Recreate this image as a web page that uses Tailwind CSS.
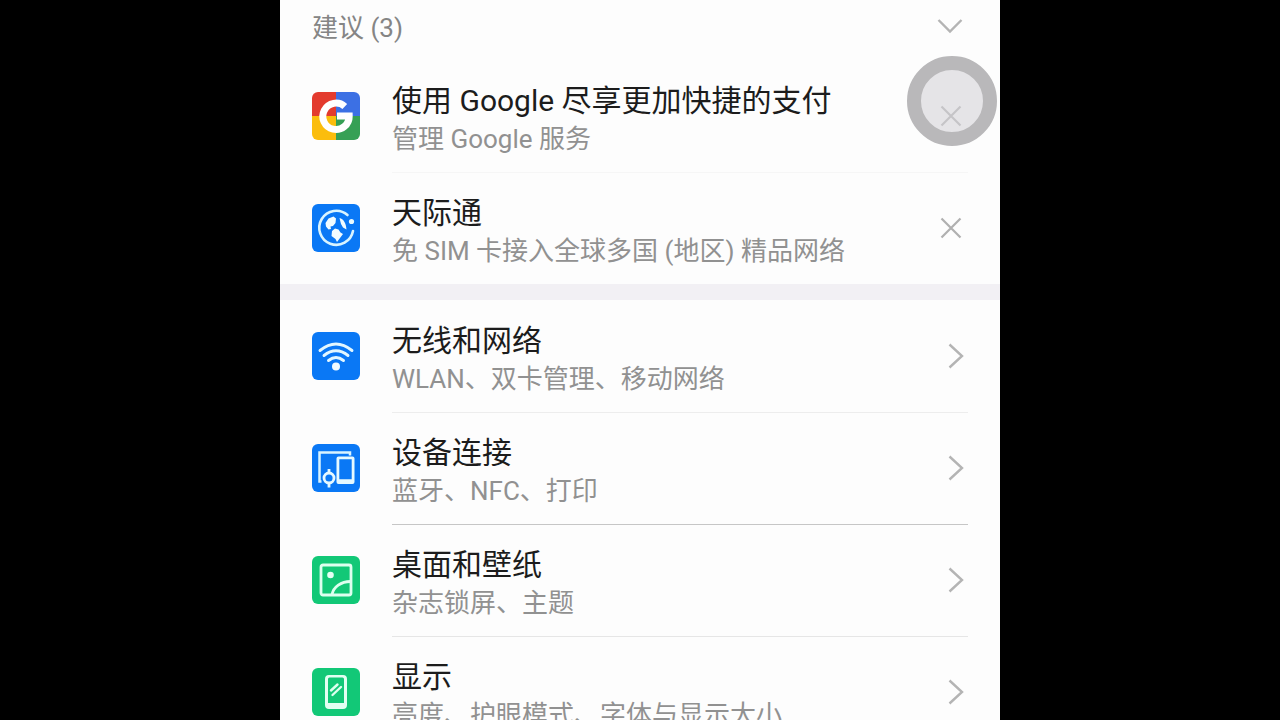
<!DOCTYPE html>
<html lang="zh-CN">
<head>
<meta charset="utf-8">
<meta name="viewport" content="width=device-width, initial-scale=1">
<title>设置</title>
<script src="https://cdn.jsdelivr.net/npm/@tailwindcss/browser@4"></script>
</head>
<body class="h-screen overflow-hidden bg-black font-['Roboto','Noto_Sans_CJK_SC',sans-serif]">
<main class="relative mx-auto min-h-full w-full max-w-[720px] bg-[#fdfdfd]">
  <section>
    <header class="flex h-15 items-start justify-between px-8 pt-2">
      <h2 class="text-[26px] leading-10 text-[#858585]">建议 (3)</h2>
      <button type="button" aria-label="收起建议" class="flex h-9 w-9 items-center justify-center">
        <svg class="h-9 w-9" viewBox="0 0 36 36" fill="none" stroke="#b4b4b4" stroke-width="2.4"><path d="M6.500 12l11.500 11.500L29.500 12"/></svg>
      </button>
    </header>
    <ul>
      <li class="flex h-28 gap-8 px-8">
        <svg class="mt-8 h-12 w-12 shrink-0" viewBox="0 0 48 48" aria-hidden="true">
          <clipPath id="tile"><rect width="48" height="48" rx="6"/></clipPath>
          <g clip-path="url(#tile)"><path fill="#e33b2e" d="M0 0h24v24H0z"/><path fill="#3c70e4" d="M24 0h24v24H24z"/><path fill="#fbbd0d" d="M0 24h24v24H0z"/><path fill="#36a055" d="M24 24h24v24H24z"/></g>
          <path d="M32.800 14.500A13.200 13.200 0 1 0 37.200 24H25" fill="none" stroke="#fff" stroke-width="7"/>
        </svg>
        <div class="flex min-w-0 grow border-t border-transparent pt-5">
          <a href="#google" class="min-w-0 grow">
            <span class="block truncate text-[30px] leading-10 text-[#1c1c1c]">使用 Google 尽享更加快捷的支付</span>
            <span class="block truncate text-[26px] leading-9 text-[#919191]">管理 Google 服务</span>
          </a>
          <button type="button" aria-label="关闭 Google 建议" class="mt-[19px] h-8 w-8 shrink-0">
            <svg class="h-8 w-8" viewBox="0 0 32 32" fill="none" stroke="#adadad" stroke-width="2.200"><path d="M5.500 6.500l19 19M24.500 6.500l-19 19"/></svg>
          </button>
        </div>
      </li>
      <li class="flex h-28 gap-8 px-8">
        <svg class="mt-8 h-12 w-12 shrink-0" viewBox="0 0 48 48" aria-hidden="true">
          <rect width="48" height="48" rx="6" fill="#0a78f5"/>
          <path d="M35.500 11A17 17 0 1 0 41 27" fill="none" stroke="#d9f4ff" stroke-width="2.600" stroke-linecap="round"/>
          <circle cx="39.500" cy="17.500" r="2.600" fill="#e9faff"/>
          <path fill="#f2fcff" d="M21.500 12.500l2.500 2-.5 4.500-2.500 3-2.500.5.500 2.500-2.500.5-2.500-3-.500-3.500 3-4.500zM23 24.500l3.500 1 2 3 2.500 1.500-3 4-3 4-1.500-3-4-3 .5-5zM27.500 14c4 1 6.500 5 7 11.500l-3.500-2-2-3.500z"/>
        </svg>
        <div class="flex min-w-0 grow border-t border-[#f6f6f6] pt-5">
          <a href="#skytone" class="min-w-0 grow">
            <span class="block truncate text-[30px] leading-10 text-[#1c1c1c]">天际通</span>
            <span class="block truncate text-[26px] leading-9 text-[#919191]">免 SIM 卡接入全球多国 (地区) 精品网络</span>
          </a>
          <button type="button" aria-label="关闭天际通建议" class="mt-[19px] h-8 w-8 shrink-0">
            <svg class="h-8 w-8" viewBox="0 0 32 32" fill="none" stroke="#b0b0b0" stroke-width="2.200"><path d="M5.500 6.500l19 19M24.500 6.500l-19 19"/></svg>
          </button>
        </div>
      </li>
    </ul>
  </section>
  <div class="h-4 bg-[#f2f0f4]"></div>
  <nav aria-label="设置">
    <a href="#network" class="flex h-28 gap-8 px-8">
      <svg class="mt-8 h-12 w-12 shrink-0" viewBox="0 0 48 48" aria-hidden="true">
        <rect width="48" height="48" rx="6" fill="#0a78f5"/>
        <g fill="none" stroke="#e2f7ff" stroke-width="2.900" stroke-linecap="round"><path d="M8 18.500Q24 5.500 40 18.500M12 23.500q12-9.500 24 0M16.500 28.500q7.500-6 15 0"/></g>
        <circle cx="24" cy="34.500" r="4" fill="#f2fcff"/>
      </svg>
      <span class="flex min-w-0 grow border-t border-transparent pt-5">
        <span class="min-w-0 grow">
          <span class="block truncate text-[30px] leading-10 text-[#1c1c1c]">无线和网络</span>
          <span class="block truncate text-[26px] leading-9 text-[#919191]">WLAN、双卡管理、移动网络</span>
        </span>
        <svg class="mt-[19px] h-8 w-6 shrink-0" viewBox="0 0 24 32" fill="none" stroke="#b4b4b4" stroke-width="2.400"><path d="M5.500 4.500L18 16 5.500 27.500"/></svg>
      </span>
    </a>
    <a href="#devices" class="flex h-28 gap-8 px-8">
      <svg class="mt-8 h-12 w-12 shrink-0" viewBox="0 0 48 48" aria-hidden="true">
        <rect width="48" height="48" rx="6" fill="#0a78f5"/>
        <path d="M9.500 37.500H7.500V8.500H38v3" fill="none" stroke="#d9f4ff" stroke-width="2.500"/>
        <path fill="#e6f9ff" fill-rule="evenodd" d="M26.500 12.500h14a2 2 0 0 1 2 2V38a2 2 0 0 1-2 2h-14a2 2 0 0 1-2-2V14.500a2 2 0 0 1 2-2zM27.300 15.300v20h12.400v-20z"/>
        <circle cx="17" cy="34" r="5" fill="none" stroke="#e6f9ff" stroke-width="2.800"/>
        <path d="M17 25v4M17 39v4.500" stroke="#e6f9ff" stroke-width="2.800"/>
      </svg>
      <span class="flex min-w-0 grow border-t border-[#ededed] pt-5">
        <span class="min-w-0 grow">
          <span class="block truncate text-[30px] leading-10 text-[#1c1c1c]">设备连接</span>
          <span class="block truncate text-[26px] leading-9 text-[#919191]">蓝牙、NFC、打印</span>
        </span>
        <svg class="mt-[19px] h-8 w-6 shrink-0" viewBox="0 0 24 32" fill="none" stroke="#b4b4b4" stroke-width="2.400"><path d="M5.500 4.500L18 16 5.500 27.500"/></svg>
      </span>
    </a>
    <a href="#wallpaper" class="flex h-28 gap-8 px-8">
      <svg class="mt-8 h-12 w-12 shrink-0" viewBox="0 0 48 48" aria-hidden="true">
        <rect width="48" height="48" rx="6" fill="#12c877"/>
        <g fill="none" stroke="#ddffef" stroke-width="2.800"><rect x="9" y="9" width="30" height="30" rx="2"/><path d="M20 38.500C21.500 31 29 25.500 38.500 25.500"/></g>
        <circle cx="18.500" cy="19" r="3.300" fill="#e6fff4"/>
      </svg>
      <span class="flex min-w-0 grow border-t border-[#c6c6c6] pt-5">
        <span class="min-w-0 grow">
          <span class="block truncate text-[30px] leading-10 text-[#1c1c1c]">桌面和壁纸</span>
          <span class="block truncate text-[26px] leading-9 text-[#919191]">杂志锁屏、主题</span>
        </span>
        <svg class="mt-[19px] h-8 w-6 shrink-0" viewBox="0 0 24 32" fill="none" stroke="#b4b4b4" stroke-width="2.400"><path d="M5.500 4.500L18 16 5.500 27.500"/></svg>
      </span>
    </a>
    <a href="#display" class="flex h-28 gap-8 px-8">
      <svg class="mt-8 h-12 w-12 shrink-0" viewBox="0 0 48 48" aria-hidden="true">
        <rect width="48" height="48" rx="6" fill="#12c877"/>
        <path fill="#e2fff2" fill-rule="evenodd" d="M17 7h14a4 4 0 0 1 4 4v26a4 4 0 0 1-4 4H17a4 4 0 0 1-4-4V11a4 4 0 0 1 4-4zM16 11v24h16V11a1.500 1.500 0 0 0-1.500-1.500h-13A1.500 1.500 0 0 0 16 11z"/>
        <path d="M19 22.500l6.500-6M20.500 27l8.500-8" stroke="#ddffef" stroke-width="2.400" stroke-linecap="round"/>
      </svg>
      <span class="flex min-w-0 grow border-t border-[#e6e6e6] pt-5">
        <span class="min-w-0 grow">
          <span class="block truncate text-[30px] leading-10 text-[#1c1c1c]">显示</span>
          <span class="block truncate text-[26px] leading-9 text-[#919191]">亮度、护眼模式、字体与显示大小</span>
        </span>
        <svg class="mt-[19px] h-8 w-6 shrink-0" viewBox="0 0 24 32" fill="none" stroke="#b4b4b4" stroke-width="2.400"><path d="M5.500 4.500L18 16 5.500 27.500"/></svg>
      </span>
    </a>
  </nav>
  <button type="button" aria-label="悬浮导航" class="absolute top-14 right-[3px] h-[90px] w-[90px] rounded-full border-[14px] border-[#b9b8ba] bg-[#d5d3d8]/60"></button>
</main>
</body>
</html>
